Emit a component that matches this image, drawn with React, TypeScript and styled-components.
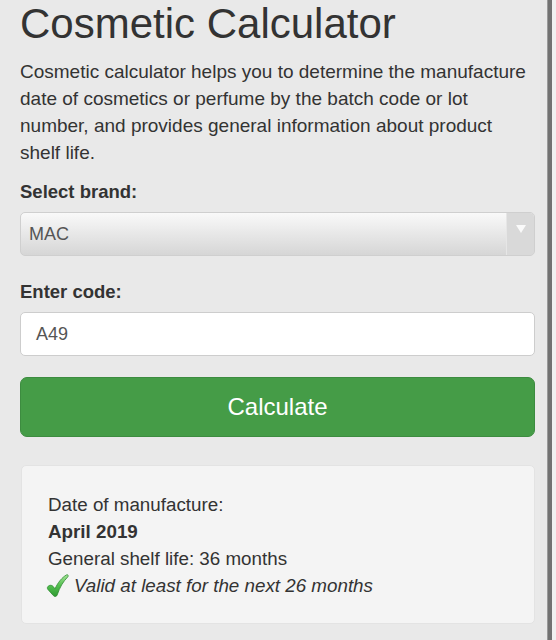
import styled, { createGlobalStyle } from "styled-components";

const GlobalStyle = createGlobalStyle`
  html, body {
    margin: 0;
    padding: 0;
    background: #e9e9e9;
    font-family: "Liberation Sans", Arial, Helvetica, sans-serif;
    color: #333;
  }
`;

const Frame = styled.div`
  display: flex;
  width: 556px;
  height: 640px;
  overflow: hidden;
`;

const Content = styled.div`
  width: 547px;
  box-sizing: border-box;
  padding: 0 12px 0 20px;
  background: #e9e9e9;
`;

const Edge = styled.div`
  width: 5px;
  background: #727272;
  border-left: 1px solid #9a9a9a;
  box-sizing: border-box;
`;

const Gutter = styled.div`
  flex: 1;
  background: #f1f1f1;
`;

const Title = styled.h1`
  margin: 1px 0 0;
  font-size: 42px;
  line-height: 46px;
  font-weight: 400;
  color: #333;
`;

const Intro = styled.p`
  margin: 11px 0 0;
  font-size: 19px;
  line-height: 27px;
`;

const Label = styled.div`
  margin-top: ${(p: { top?: number }) => p.top ?? 14}px;
  font-size: 18.5px;
  line-height: 27px;
  font-weight: 700;
`;

const SelectBox = styled.div`
  margin-top: 7px;
  height: 44px;
  display: flex;
  border: 1px solid #cfcfcf;
  border-radius: 5px;
  background: linear-gradient(#f9f9f9, #d6d6d6);
  overflow: hidden;
  box-sizing: border-box;
`;

const SelectValue = styled.div`
  flex: 1;
  display: flex;
  align-items: center;
  padding-left: 8px;
  font-size: 18px;
  color: #555;
`;

const ArrowCell = styled.div`
  width: 27px;
  display: flex;
  align-items: center;
  justify-content: center;
  background: #d9d9d9;
  border-left: 1px solid #e6e6e6;
`;

const Arrow = styled.div`
  width: 0;
  height: 0;
  border-left: 5px solid transparent;
  border-right: 5px solid transparent;
  border-top: 8px solid #fafafa;
  margin-top: -10px;
`;

const CodeInput = styled.div`
  margin-top: 7px;
  height: 44px;
  box-sizing: border-box;
  border: 1px solid #cdcdcd;
  border-radius: 5px;
  background: #fff;
  display: flex;
  align-items: center;
  padding-left: 15px;
  font-size: 18px;
  color: #555;
`;

const CalcButton = styled.button`
  margin-top: 21px;
  width: 100%;
  height: 60px;
  border: 1px solid #3d8c40;
  border-radius: 7px;
  background: #459c47;
  color: #fff;
  font-family: "Liberation Sans", Arial, sans-serif;
  font-size: 24px;
  cursor: pointer;
`;

const Result = styled.div`
  margin-top: 28px;
  margin-left: 1px;
  height: 159px;
  box-sizing: border-box;
  padding: 25px 26px;
  background: #f4f4f4;
  border: 1px solid #e3e3e3;
  border-radius: 5px;
  font-size: 18.8px;
  line-height: 27px;
`;

const Line = styled.div<{ bold?: boolean }>`
  font-weight: ${(p) => (p.bold ? 700 : 400)};
`;

const ValidLine = styled.div`
  display: flex;
  align-items: center;
  gap: 5px;
  margin-left: -2px;
  font-style: italic;
`;

const Check = () => (
  <svg width="23" height="25" viewBox="0 0 23 24">
    <defs>
      <linearGradient id="chk" x1="0" y1="0" x2="0" y2="1">
        <stop offset="0" stopColor="#a4e497" />
        <stop offset="0.5" stopColor="#52bf4e" />
        <stop offset="1" stopColor="#2f9a32" />
      </linearGradient>
    </defs>
    <path
      d="M1.6 13.5 C3 11.3 5.6 11.3 7.2 13 L9 15.3 C12 8.8 16 4 20.5 1.4 C22.2 0.8 22.8 2.4 21.6 3.6 C17.2 8 13.6 14 11.2 21.4 C10.5 23.3 8.4 23.5 7.3 22 L1.9 15.9 C1.3 15.1 1.2 14.2 1.6 13.5 Z"
      fill="url(#chk)"
      stroke="#2c8a2e"
      strokeWidth="0.8"
    />
  </svg>
);

export default function App() {
  return (
    <>
      <GlobalStyle />
      <Frame>
        <Content>
          <Title>Cosmetic Calculator</Title>
          <Intro>
            Cosmetic calculator helps you to determine the manufacture date of
            cosmetics or perfume by the batch code or lot number, and provides
            general information about product shelf life.
          </Intro>
          <Label top={12}>Select brand:</Label>
          <SelectBox>
            <SelectValue>MAC</SelectValue>
            <ArrowCell>
              <Arrow />
            </ArrowCell>
          </SelectBox>
          <Label top={22}>Enter code:</Label>
          <CodeInput>A49</CodeInput>
          <CalcButton>Calculate</CalcButton>
          <Result>
            <Line>Date of manufacture:</Line>
            <Line bold>April 2019</Line>
            <Line>General shelf life: 36 months</Line>
            <ValidLine>
              <Check />
              <span>Valid at least for the next 26 months</span>
            </ValidLine>
          </Result>
        </Content>
        <Edge />
        <Gutter />
      </Frame>
    </>
  );
}
